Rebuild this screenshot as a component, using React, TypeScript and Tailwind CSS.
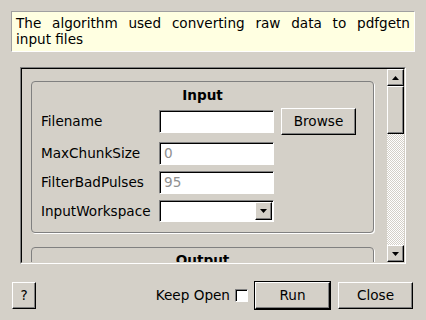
import React from "react";

const raised =
	"border border-t-white border-l-white border-r-black border-b-black shadow-[inset_-1px_-1px_0_#808080] bg-[#d4d0c8]";
const sunken =
	"border border-t-[#808080] border-l-[#808080] border-r-white border-b-white shadow-[inset_1px_1px_0_#000]";

function Field({ value, h = "h-[23px]" }: { value?: string; h?: string }) {
	return (
		<div className={`${sunken} ${h} w-[115px] bg-white flex items-center px-[4px] text-[#909090]`}>
			{value}
		</div>
	);
}

function Arrow({ down }: { down?: boolean }) {
	return (
		<svg width="7" height="4" viewBox="0 0 7 4">
			<polygon points={down ? "0,0 7,0 3.5,4" : "0,4 7,4 3.5,0"} fill="#000" />
		</svg>
	);
}

export default function App() {
	return (
		<div
			className="w-[426px] h-[320px] bg-[#d4d0c8] flex flex-col text-[13.6px] text-black overflow-hidden"
			style={{ fontFamily: '"DejaVu Sans", sans-serif' }}
		>
			<div className="mx-[11px] mt-[11px] h-[41px] bg-[#ffffe1] border border-t-[#a0a0a0] border-l-[#a0a0a0] border-r-white border-b-white px-[4px] pt-[3px] leading-[16px]">
				<div className="text-justify [text-align-last:justify]">
					The algorithm used converting raw data to pdfgetn
				</div>
				<div>input files</div>
			</div>

			<div className="ml-[20px] mt-[15px] w-[386px] h-[197px] border border-t-[#808080] border-l-[#808080] border-r-white border-b-white">
				<div className="w-full h-full border border-t-black border-l-black border-r-[#d4d0c8] border-b-[#d4d0c8] flex">
					<div className="flex-1 overflow-hidden pl-[9px] pr-[13px] pt-[12px]">
						<div className="h-[152px] border border-[#808080] rounded-[4px] shadow-[1px_1px_0_#fff] flex flex-col pl-[9px] pt-[5px]">
							<div className="text-center font-bold leading-[16px] pr-[9px]">Input</div>
							<div className="flex items-center h-[27px] mt-[5px]">
								<div className="w-[118px]">Filename</div>
								<Field />
								<button className={`${raised} ml-[7px] w-[75px] h-[27px] text-[13.6px]`}>Browse</button>
							</div>
							<div className="flex items-center h-[23px] mt-[7px]">
								<div className="w-[118px]">MaxChunkSize</div>
								<Field value="0" />
							</div>
							<div className="flex items-center h-[23px] mt-[6px]">
								<div className="w-[118px]">FilterBadPulses</div>
								<Field value="95" />
							</div>
							<div className="flex items-center h-[22px] mt-[6px]">
								<div className="w-[118px]">InputWorkspace</div>
								<div className={`${sunken} h-[22px] w-[115px] bg-white flex justify-end items-stretch p-[1px]`}>
									<div className={`${raised} w-[17px] flex items-center justify-center`}>
										<Arrow down />
									</div>
								</div>
							</div>
						</div>
						<div className="mt-[14px] h-[40px] border border-[#808080] rounded-[4px] shadow-[1px_1px_0_#fff] pt-[4px]">
							<div className="text-center font-bold leading-[16px]">Output</div>
						</div>
					</div>
					<div className="w-[17px] flex flex-col">
						<div className={`${raised} h-[17px] flex items-center justify-center`}>
							<Arrow />
						</div>
						<div className={`${raised} h-[48px]`} />
						<div className="flex-1 bg-[repeating-conic-gradient(#d4d0c8_0_25%,#ffffff_0_50%)] bg-[length:2px_2px]" />
						<div className={`${raised} h-[17px] flex items-center justify-center`}>
							<Arrow down />
						</div>
					</div>
				</div>
			</div>

			<div className="flex items-center mt-[17px] pl-[12px] pr-[13px] h-[28px]">
				<button className={`${raised} w-[24px] h-[27px] text-[13.6px]`}>?</button>
				<div className="flex-1" />
				<span>Keep Open</span>
				<div className={`${sunken} ml-[5px] w-[13px] h-[13px] bg-white`} />
				<div className="ml-[6px] border border-black">
					<button className={`${raised} w-[75px] h-[27px] text-[13.6px]`}>Run</button>
				</div>
				<button className={`${raised} ml-[7px] w-[75px] h-[27px] text-[13.6px]`}>Close</button>
			</div>
		</div>
	);
}
